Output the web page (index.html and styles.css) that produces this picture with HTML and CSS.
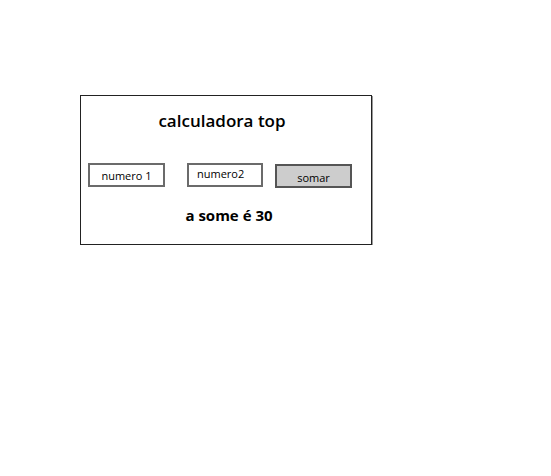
FILE: index.html
```html
<!DOCTYPE html>
<html>

<head>
    <meta charset="utf-8">
    <title>calculadora top</title>
    <link rel="stylesheet" href="styles.css">
</head>

<body>
    <div class="card">
        <h1 class="title">calculadora top</h1>
        <div class="row">
            <div class="field first">numero 1</div>
            <div class="field second">numero2</div>
            <div class="btn">somar</div>
        </div>
        <p class="result">a some é 30</p>
    </div>
</body>

</html>
```

FILE: styles.css
```css
body {
    margin: 0;
    padding: 95px 0 0 80px;
    background-color: white;
    font-family: "Open Sans", "DejaVu Sans", sans-serif;
    color: black;
}

.card {
    width: 290px;
    height: 148px;
    border: 1px solid #222;
    box-shadow: 1px 1px 0 #999;
    display: flex;
    flex-direction: column;
    align-items: center;
}

.title {
    margin: 14px 0 0 -8px;
    font-size: 17px;
    font-weight: 600;
    line-height: 22px;
}

.row {
    display: flex;
    align-self: stretch;
    margin: 31px 0 0 7px;
}

.field,
.btn {
    box-sizing: border-box;
    height: 24px;
    border: 2px solid #6b6b6b;
    font-size: 11px;
    display: flex;
    align-items: center;
    justify-content: center;
}

.field {
    background-color: white;
}

.first {
    width: 77px;
}

.second {
    width: 76px;
    margin-left: 22px;
    align-items: flex-start;
    justify-content: flex-start;
    padding: 1px 0 0 8px;
}

.btn {
    width: 77px;
    margin-left: 12px;
    margin-top: 1px;
    background-color: #cdcdcd;
    border-color: #555;
    padding-top: 2px;
}

.result {
    margin: 17px 0 0 6px;
    font-size: 15px;
    font-weight: 700;
    line-height: 20px;
}
```
